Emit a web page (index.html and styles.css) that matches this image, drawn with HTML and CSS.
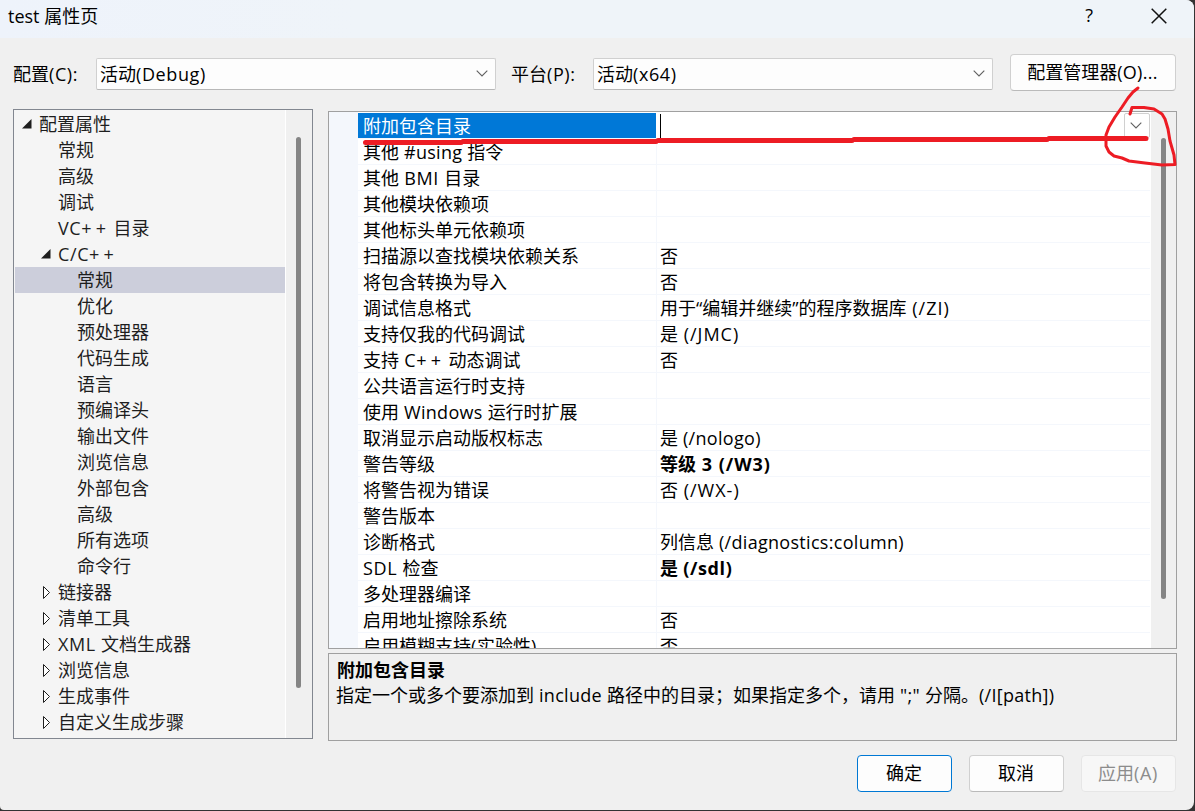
FILE: index.html
```html
<!DOCTYPE html>
<html lang="zh-CN">
<head>
    <meta charset="UTF-8">
    <title>test 属性页</title>
    <link rel="stylesheet" href="styles.css">
</head>
<body>
    <div class="dialog">
        <header class="titlebar">
            <span class="title">test 属性页</span>
            <span class="help">?</span>
            <svg class="close" width="16" height="16" viewBox="0 0 16 16"><path d="M0.7 0.7L15.3 15.3M15.3 0.7L0.7 15.3"/></svg>
        </header>

        <div class="toolbar">
            <label class="config-label">配置<i>(C):</i></label>
            <div class="combo">活动<i>(Debug)</i><svg class="chevron" width="12" height="7" viewBox="0 0 12 7"><path d="M0.7 0.7L6 6L11.3 0.7"/></svg></div>
            <label class="platform-label">平台<i>(P):</i></label>
            <div class="combo">活动<i>(x64)</i><svg class="chevron" width="12" height="7" viewBox="0 0 12 7"><path d="M0.7 0.7L6 6L11.3 0.7"/></svg></div>
            <button class="btn manager">配置管理器<i class="word">(O)...</i></button>
        </div>

        <main class="content">
            <div class="tree">
                <ul class="tree-list" id="tree"></ul>
                <div class="scrollbar"><div class="thumb tree-thumb"></div></div>
            </div>
            <div class="right">
                <div class="grid">
                    <div class="gutter"></div>
                    <div class="rows" id="rows"></div>
                    <div class="scrollbar"><div class="thumb grid-thumb"></div></div>
                </div>
                <div class="description">
                    <b>附加包含目录</b>
                    <p>指定一个或多个要添加到<i class="word"> include </i>路径中的目录；如果指定多个，请用<i class="word"> ";" </i>分隔。<i class="word">(/I[path])</i></p>
                </div>
            </div>
        </main>

        <footer class="buttons">
            <button class="btn primary">确定</button>
            <button class="btn">取消</button>
            <button class="btn" disabled>应用<i>(A)</i></button>
        </footer>

        <!-- red pen marks -->
        <svg class="marks" width="1195" height="811" viewBox="0 0 1195 811">
            <path class="underline" d="M365.500 142.500H461M463 141.500H656M658 140.500H852M854 139.500H1047M1049 138.500H1146"/>
            <path class="circle" d="M1138 88L1133 92L1128 98L1122 107L1115 117L1109 127L1106 135L1106 146L1109 152L1114 156L1122 158L1129 161L1145 163L1162 165L1175 164.500L1174 155L1170 141L1168 129L1165 119L1162 114L1154 109L1144 107.500L1132 107.500L1130 114"/>
        </svg>
    </div>
    <script src="script.js"></script>
</body>
</html>
```
FILE: script.js
```js
// [level, arrow, text]
const tree = [
    [0, "open", "配置属性"],
    [1, "", "常规"],
    [1, "", "高级"],
    [1, "", "调试"],
    [1, "", "VC++ 目录"],
    [1, "open", "C/C++"],
    [2, "", "常规"],
    [2, "", "优化"],
    [2, "", "预处理器"],
    [2, "", "代码生成"],
    [2, "", "语言"],
    [2, "", "预编译头"],
    [2, "", "输出文件"],
    [2, "", "浏览信息"],
    [2, "", "外部包含"],
    [2, "", "高级"],
    [2, "", "所有选项"],
    [2, "", "命令行"],
    [1, "closed", "链接器"],
    [1, "closed", "清单工具"],
    [1, "closed", "XML 文档生成器"],
    [1, "closed", "浏览信息"],
    [1, "closed", "生成事件"],
    [1, "closed", "自定义生成步骤"]
];

const props = [
    ["附加包含目录", ""],
    ["其他 #using 指令", ""],
    ["其他 BMI 目录", ""],
    ["其他模块依赖项", ""],
    ["其他标头单元依赖项", ""],
    ["扫描源以查找模块依赖关系", "否"],
    ["将包含转换为导入", "否"],
    ["调试信息格式", "用于“编辑并继续”的程序数据库 (/ZI)"],
    ["支持仅我的代码调试", "是 (/JMC)"],
    ["支持 C++ 动态调试", "否"],
    ["公共语言运行时支持", ""],
    ["使用 Windows 运行时扩展", ""],
    ["取消显示启动版权标志", "是 (/nologo)"],
    ["警告等级", "等级 3 (/W3)", true],
    ["将警告视为错误", "否 (/WX-)"],
    ["警告版本", ""],
    ["诊断格式", "列信息 (/diagnostics:column)"],
    ["SDL 检查", "是 (/sdl)", true],
    ["多处理器编译", ""],
    ["启用地址擦除系统", "否"],
    ["启用模糊支持(实验性)", "否"]
];

const arrows = {
    open: '<svg class="arrow" width="10" height="10" viewBox="0 0 10 10"><path class="solid" d="M9.500 0V9.500H0Z"/></svg>',
    closed: '<svg class="arrow" width="10" height="14" viewBox="0 0 10 14"><path class="hollow" d="M2.500 0.500V12.500L8.500 6.500Z"/></svg>'
};

// latin runs get their own tag so they can be spaced separately
function latin(text) {
    return text.replace(/[ -~]+/g, run => {
        let cls = "";
        if (/[a-z]{4}/.test(run)) cls = "word";
        if (/[A-Z]{2}|\/W/.test(run)) cls = "caps";
        return `<i class="${cls}">${run}</i>`;
    }).replace("++", '<span class="plus">++</span>');
}

document.getElementById("tree").innerHTML = tree.map(([level, arrow, text], n) =>
    `<li class="level${level}${n === 6 ? " selected" : ""}"><span class="arrow-box ${arrow}">${arrows[arrow] || ""}</span>${latin(text)}</li>`
).join("");

const editor = '<span class="caret"></span><span class="drop"><svg class="chevron" width="12" height="7" viewBox="0 0 12 7"><path d="M0.7 0.7L6 6L11.3 0.7"/></svg></span>';

document.getElementById("rows").innerHTML = props.map(([name, value, bold], n) =>
    `<div class="row${n === 0 ? " active" : ""}"><div class="name">${latin(name)}</div><div class="value${bold ? " bold" : ""}">${n === 0 ? editor : latin(value)}</div></div>`
).join("");
```
FILE: styles.css
```css
* {
    box-sizing: border-box;
}
body {
    margin: 0;
    background-color: #333;
    color: #000;
    font: 400 18px/26px "Open Sans", "Noto Sans CJK SC", sans-serif;
}
i {
    font-style: normal;
    white-space: pre;
    letter-spacing: 0.6px;
}
.word {
    letter-spacing: 0.3px;
}
.value .caps {
    letter-spacing: 1px;
}
.dialog {
    position: relative;
    width: 1194px;
    height: 810px;
    background-color: #f0f0f0;
    border-radius: 0 8px 8px 4px;
    overflow: hidden;
}
.titlebar {
    display: flex;
    height: 38px;
    padding: 3px 27px 0 8px;
    background: linear-gradient(90deg, #eef3fb, #eff4f9 30%);
}
.title {
    flex: 1;
}
.help {
    margin: -1px 58px 0 0;
}
.close {
    margin-top: 5px;
    fill: none;
    stroke: #111;
    stroke-width: 1.5;
}
.toolbar {
    display: flex;
    align-items: flex-start;
    height: 71px;
    padding: 20px 18px 0 13px;
}
.toolbar label {
    padding-top: 3px;
}
.config-label {
    width: 83px;
}
.platform-label {
    width: 97px;
    padding-left: 15px;
}
.combo {
    display: flex;
    align-items: center;
    width: 400px;
    height: 32px;
    padding: 0 7px 1px 3px;
    background-color: #fdfdfd;
    border: 1px solid #d0d0d0;
    border-bottom-color: #b8b8b8;
    border-radius: 2px;
}
.chevron {
    margin-left: auto;
    fill: none;
    stroke: #606060;
    stroke-width: 1.1;
}
.btn {
    width: 95px;
    height: 37px;
    padding: 0 1px 2px 0;
    background-color: #fdfdfd;
    border: 1px solid #d0d0d0;
    border-bottom-color: #bababa;
    border-radius: 4px;
    font: inherit;
    color: #000;
}
.manager {
    width: 166px;
    margin: -4px 0 0 17px;
}
.content {
    display: flex;
    gap: 15px;
    height: 632px;
    padding: 0 17px 0 13px;
}
.tree {
    display: flex;
    width: 300px;
    height: 630px;
    border: 1px solid #828790;
    background-color: #f5f5f5;
}
.tree-list {
    width: 272px;
    margin: 0;
    padding: 1px 0 0 1px;
    list-style: none;
    color: #1e1e1e;
    border-right: 1px solid #fff;
}
.tree-list li {
    display: flex;
    height: 26px;
}
.selected {
    background-color: #cccedb;
}
.level0 {
    padding-left: 7px;
}
.level1 {
    padding-left: 26px;
}
.level2 {
    padding-left: 45px;
}
.arrow-box {
    width: 17px;
    padding-top: 8px;
    line-height: 0;
}
.arrow-box.closed {
    padding-top: 7px;
}
.solid {
    fill: #1e1e1e;
}
.hollow {
    fill: #fff;
    stroke: #1e1e1e;
}
.plus {
    margin-right: -2px;
    letter-spacing: 4.2px;
}
.scrollbar {
    flex: 1;
    background-color: #f0f0f0;
}
.thumb {
    width: 5px;
    background-color: #858585;
    border-radius: 3px;
}
.tree-thumb {
    height: 551px;
    margin: 27px 0 0 10px;
}
.grid-thumb {
    height: 461px;
    margin: 26px 0 0 10px;
}
.right {
    width: 849px;
    padding-top: 2px;
}
.grid {
    display: flex;
    height: 538px;
    border: 1px solid #a0a0a0;
    overflow: hidden;
}
.gutter {
    width: 29px;
    background-color: #f4f7fc;
}
.rows {
    width: 793px;
    padding: 1px 1px 0 0;
    background-color: #fff;
}
.row {
    display: flex;
    height: 26px;
    border-bottom: 1px solid #f4f7fc;
}
.name {
    width: 299px;
    padding-left: 5px;
    border-right: 1px solid #f4f7fc;
}
.value {
    display: flex;
    flex: 1;
    padding-left: 3px;
}
.active .name {
    background-color: #0078d7;
    color: #fff;
    border-right-color: #fff;
}
.bold {
    font-weight: bold;
}
.caret {
    width: 1px;
    height: 24px;
    margin-top: 1px;
    background-color: #000;
}
.drop {
    display: flex;
    align-items: center;
    width: 26px;
    height: 25px;
    margin-left: auto;
    padding-right: 7px;
    border: 1px solid #d0d0d0;
    border-radius: 2px;
}
.description {
    height: 88px;
    margin-top: 4px;
    padding: 3px 7px;
    border: 1px solid #a0a0a0;
}
.description b {
    display: block;
    height: 25px;
    padding-left: 1px;
}
.description p {
    margin: 0;
    white-space: nowrap;
}
.buttons {
    display: flex;
    justify-content: flex-end;
    gap: 17px;
    padding: 14px 18px 0 0;
}
.primary {
    border-color: #0078d4;
}
.btn:disabled {
    background-color: #f7f7f7;
    border-color: #e6e6e6;
    color: #8c8c8c;
}
.marks {
    position: absolute;
    top: 0;
    left: 0;
    fill: none;
    stroke: #ed1c24;
    stroke-linecap: round;
    stroke-linejoin: round;
}
.underline {
    stroke-width: 5;
}
.circle {
    stroke-width: 3;
}
```
